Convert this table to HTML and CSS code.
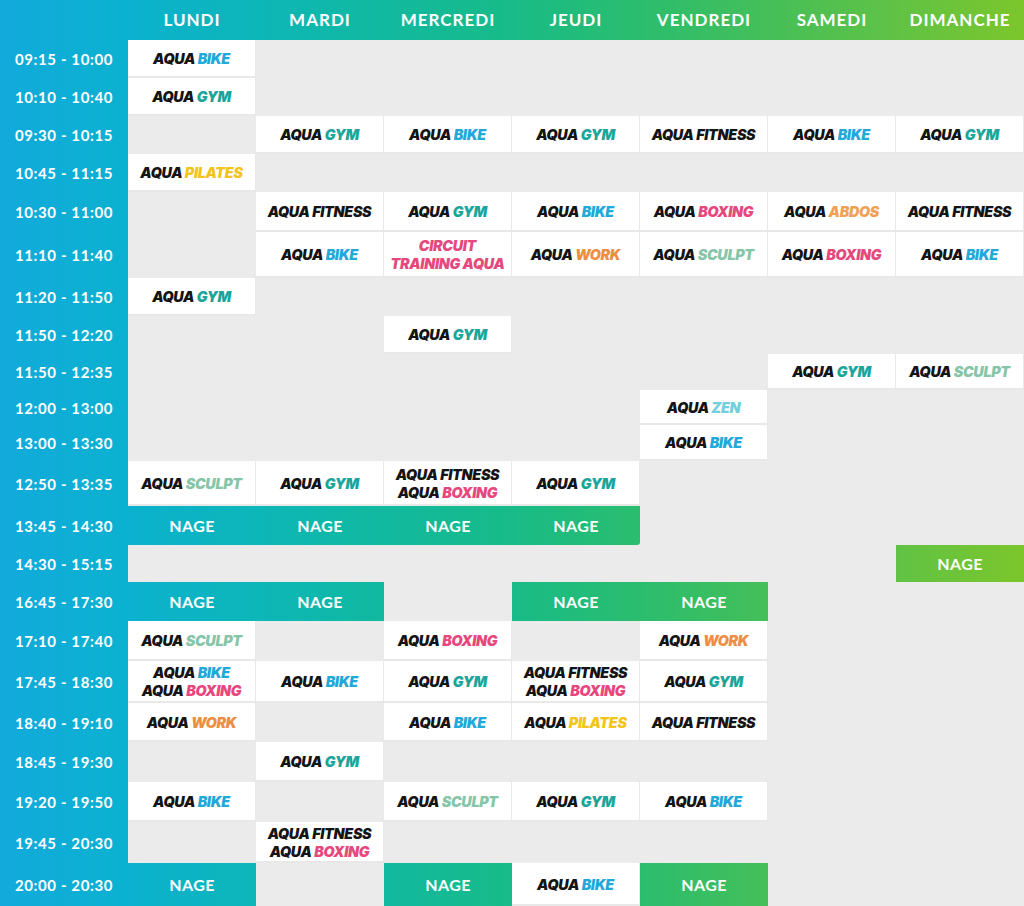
FILE: index.html
```html
<!DOCTYPE html>
<html lang="fr">
<head>
<meta charset="utf-8">
<title>Planning Aqua</title>
<link rel="stylesheet" href="styles.css">
</head>
<body>
<div class="planning">
  <div class="g h"></div>
  <div class="g h">LUNDI</div>
  <div class="g h">MARDI</div>
  <div class="g h">MERCREDI</div>
  <div class="g h">JEUDI</div>
  <div class="g h">VENDREDI</div>
  <div class="g h">SAMEDI</div>
  <div class="g h">DIMANCHE</div>

  <div class="g t">09:15 - 10:00</div>
  <div class="w"><p>AQUA <span class="bike">BIKE</span></p></div>
  <div></div><div></div><div></div><div></div><div></div><div></div>

  <div class="g t">10:10 - 10:40</div>
  <div class="w"><p>AQUA <span class="gym">GYM</span></p></div>
  <div></div><div></div><div></div><div></div><div></div><div></div>

  <div class="g t">09:30 - 10:15</div>
  <div></div>
  <div class="w"><p>AQUA <span class="gym">GYM</span></p></div>
  <div class="w"><p>AQUA <span class="bike">BIKE</span></p></div>
  <div class="w"><p>AQUA <span class="gym">GYM</span></p></div>
  <div class="w"><p>AQUA FITNESS</p></div>
  <div class="w"><p>AQUA <span class="bike">BIKE</span></p></div>
  <div class="w"><p>AQUA <span class="gym">GYM</span></p></div>

  <div class="g t">10:45 - 11:15</div>
  <div class="w"><p>AQUA <span class="pilates">PILATES</span></p></div>
  <div></div><div></div><div></div><div></div><div></div><div></div>

  <div class="g t">10:30 - 11:00</div>
  <div></div>
  <div class="w"><p>AQUA FITNESS</p></div>
  <div class="w"><p>AQUA <span class="gym">GYM</span></p></div>
  <div class="w"><p>AQUA <span class="bike">BIKE</span></p></div>
  <div class="w"><p>AQUA <span class="boxing">BOXING</span></p></div>
  <div class="w"><p>AQUA <span class="abdos">ABDOS</span></p></div>
  <div class="w"><p>AQUA FITNESS</p></div>

  <div class="g t">11:10 - 11:40</div>
  <div></div>
  <div class="w"><p>AQUA <span class="bike">BIKE</span></p></div>
  <div class="w"><p class="boxing">CIRCUIT<br>TRAINING AQUA</p></div>
  <div class="w"><p>AQUA <span class="work">WORK</span></p></div>
  <div class="w"><p>AQUA <span class="sculpt">SCULPT</span></p></div>
  <div class="w"><p>AQUA <span class="boxing">BOXING</span></p></div>
  <div class="w"><p>AQUA <span class="bike">BIKE</span></p></div>

  <div class="g t">11:20 - 11:50</div>
  <div class="w"><p>AQUA <span class="gym">GYM</span></p></div>
  <div></div><div></div><div></div><div></div><div></div><div></div>

  <div class="g t">11:50 - 12:20</div>
  <div></div><div></div>
  <div class="w"><p>AQUA <span class="gym">GYM</span></p></div>
  <div></div><div></div><div></div><div></div>

  <div class="g t">11:50 - 12:35</div>
  <div></div><div></div><div></div><div></div><div></div>
  <div class="w"><p>AQUA <span class="gym">GYM</span></p></div>
  <div class="w"><p>AQUA <span class="sculpt">SCULPT</span></p></div>

  <div class="g t">12:00 - 13:00</div>
  <div></div><div></div><div></div><div></div>
  <div class="w"><p>AQUA <span class="zen">ZEN</span></p></div>
  <div></div><div></div>

  <div class="g t">13:00 - 13:30</div>
  <div></div><div></div><div></div><div></div>
  <div class="w"><p>AQUA <span class="bike">BIKE</span></p></div>
  <div></div><div></div>

  <div class="g t">12:50 - 13:35</div>
  <div class="w"><p>AQUA <span class="sculpt">SCULPT</span></p></div>
  <div class="w"><p>AQUA <span class="gym">GYM</span></p></div>
  <div class="w"><p>AQUA FITNESS<br>AQUA <span class="boxing">BOXING</span></p></div>
  <div class="w"><p>AQUA <span class="gym">GYM</span></p></div>
  <div></div><div></div><div></div>

  <div class="g t">13:45 - 14:30</div>
  <div class="g n">NAGE</div>
  <div class="g n">NAGE</div>
  <div class="g n">NAGE</div>
  <div class="g n end">NAGE</div>
  <div></div><div></div><div></div>

  <div class="g t">14:30 - 15:15</div>
  <div></div><div></div><div></div><div></div><div></div><div></div>
  <div class="g n">NAGE</div>

  <div class="g t">16:45 - 17:30</div>
  <div class="g n">NAGE</div>
  <div class="g n">NAGE</div>
  <div></div>
  <div class="g n">NAGE</div>
  <div class="g n">NAGE</div>
  <div></div><div></div>

  <div class="g t">17:10 - 17:40</div>
  <div class="w"><p>AQUA <span class="sculpt">SCULPT</span></p></div>
  <div></div>
  <div class="w"><p>AQUA <span class="boxing">BOXING</span></p></div>
  <div></div>
  <div class="w"><p>AQUA <span class="work">WORK</span></p></div>
  <div></div><div></div>

  <div class="g t">17:45 - 18:30</div>
  <div class="w"><p>AQUA <span class="bike">BIKE</span><br>AQUA <span class="boxing">BOXING</span></p></div>
  <div class="w"><p>AQUA <span class="bike">BIKE</span></p></div>
  <div class="w"><p>AQUA <span class="gym">GYM</span></p></div>
  <div class="w"><p>AQUA FITNESS<br>AQUA <span class="boxing">BOXING</span></p></div>
  <div class="w"><p>AQUA <span class="gym">GYM</span></p></div>
  <div></div><div></div>

  <div class="g t">18:40 - 19:10</div>
  <div class="w"><p>AQUA <span class="work">WORK</span></p></div>
  <div></div>
  <div class="w"><p>AQUA <span class="bike">BIKE</span></p></div>
  <div class="w"><p>AQUA <span class="pilates">PILATES</span></p></div>
  <div class="w"><p>AQUA FITNESS</p></div>
  <div></div><div></div>

  <div class="g t">18:45 - 19:30</div>
  <div></div>
  <div class="w"><p>AQUA <span class="gym">GYM</span></p></div>
  <div></div><div></div><div></div><div></div><div></div>

  <div class="g t">19:20 - 19:50</div>
  <div class="w"><p>AQUA <span class="bike">BIKE</span></p></div>
  <div></div>
  <div class="w"><p>AQUA <span class="sculpt">SCULPT</span></p></div>
  <div class="w"><p>AQUA <span class="gym">GYM</span></p></div>
  <div class="w"><p>AQUA <span class="bike">BIKE</span></p></div>
  <div></div><div></div>

  <div class="g t">19:45 - 20:30</div>
  <div></div>
  <div class="w"><p>AQUA FITNESS<br>AQUA <span class="boxing">BOXING</span></p></div>
  <div></div><div></div><div></div><div></div><div></div>

  <div class="g t">20:00 - 20:30</div>
  <div class="g n">NAGE</div>
  <div></div>
  <div class="g n">NAGE</div>
  <div class="w"><p>AQUA <span class="bike">BIKE</span></p></div>
  <div class="g n">NAGE</div>
  <div></div><div></div>
</div>
</body>
</html>
```

FILE: styles.css
```css
* { box-sizing: border-box; }

html, body {
  margin: 0;
  padding: 0;
  width: 1024px;
  height: 906px;
  overflow: hidden;
  background: #ebebeb;
}

.planning {
  display: grid;
  grid-template-columns: 128px repeat(7, minmax(0, 1fr));
  grid-template-rows: 40px 38px 38px 38px 38px 40px 46px 38px 38px 36px 35px 36px 45px 39px 37px 39px 40px 42px 39px 40px 40px 41px 43px;
  width: 1024px;
  height: 906px;
  background: #ebebeb;
}

.g {
  background: linear-gradient(90deg, #12aadc 0%, #0bb1d0 12%, #0db6b8 25%, #11b9a0 37%, #18bb88 50%, #2abd6f 62%, #45bf59 75%, #5fc246 87%, #7cc62b 100%) fixed;
  color: #fff;
  display: flex;
  align-items: center;
  justify-content: center;
  font-family: "Lato", "Open Sans", sans-serif;
  font-weight: 700;
  white-space: nowrap;
}

.h {
  font-size: 17px;
  letter-spacing: 1px;
  padding-bottom: 2px;
}

.t {
  font-size: 15px;
  letter-spacing: 0.6px;
}

.n {
  font-size: 16px;
  letter-spacing: 0.4px;
  padding-bottom: 1px;
}

.end {
  border-bottom-right-radius: 3px;
}

.w {
  background: #fff;
  border-right: 1px solid #e8e8e8;
  border-bottom: 2px solid #e8e8e8;
  padding-top: 2px;
  display: flex;
  align-items: center;
  justify-content: center;
}

.w p {
  margin: 0;
  text-align: center;
  white-space: nowrap;
  font-family: "Inter", "Liberation Sans", sans-serif;
  font-style: italic;
  font-weight: 900;
  font-size: 14.3px;
  line-height: 18px;
  letter-spacing: -0.3px;
  color: #141414;
}

.w p.boxing { color: #e6487d; }
.bike { color: #22a9da; }
.gym { color: #1ba59c; }
.pilates { color: #f3c41b; }
.boxing { color: #e6487d; }
.abdos { color: #f0a154; }
.work { color: #ee8e45; }
.sculpt { color: #86c5a8; }
.zen { color: #72d0de; }
```
